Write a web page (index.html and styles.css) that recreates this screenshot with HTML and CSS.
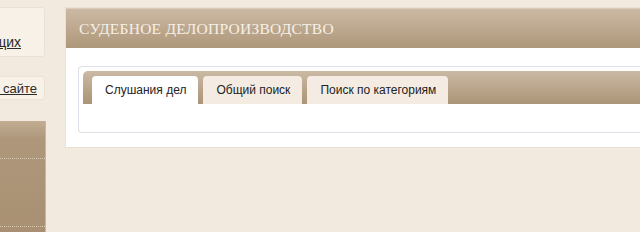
FILE: index.html
```html
<!DOCTYPE html>
<html lang="ru">
<head>
<meta charset="utf-8">
<title>Судебное делопроизводство</title>
<link rel="stylesheet" href="styles.css">
</head>
<body>
<div class="page">
  <aside class="side">
    <div class="side-box side-box--tall"><a href="#" class="side-link side-link--big">Для участвующих</a></div>
    <div class="side-box side-box--short"><a href="#" class="side-link">Информация о сайте</a></div>
    <div class="side-menu">
      <div class="side-menu-item"></div>
      <div class="side-menu-item"></div>
    </div>
  </aside>
  <main class="panel">
    <h1 class="panel-title">Судебное делопроизводство</h1>
    <div class="panel-body">
      <div class="tabs-box">
        <ul class="tabs">
          <li class="tab tab--active">Слушания дел</li>
          <li class="tab">Общий поиск</li>
          <li class="tab">Поиск по категориям</li>
        </ul>
        <div class="tab-content"></div>
      </div>
    </div>
  </main>
</div>
</body>
</html>
```

FILE: styles.css
```css
html, body {
  margin: 0;
  padding: 0;
  background: #f2e9df;
  overflow: hidden;
  height: 232px;
}
.page {
  display: flex;
  align-items: flex-start;
  gap: 20px;
  margin-left: -155px;
  padding-top: 7px;
  width: 1000px;
  font-family: "Liberation Sans", Arial, sans-serif;
}
.side {
  width: 200px;
  flex: none;
  display: flex;
  flex-direction: column;
}
.side-box {
  background: #f8f1e8;
  border: 1px solid #ebe1d5;
  border-radius: 3px;
  box-sizing: border-box;
  display: flex;
  justify-content: flex-end;
}
.side-box--tall {
  height: 50px;
  align-items: flex-end;
  padding: 0 23px 6px 0;
}
.side-box--short {
  height: 24px;
  margin-top: 19px;
  align-items: center;
  padding: 0 7px 0 0;
}
.side-link {
  color: #2b2b2b;
  text-decoration: underline;
  font-size: 13px;
  white-space: nowrap;
}
.side-link--big {
  font-size: 14px;
}
.side-menu {
  margin-top: 21px;
  height: 120px;
  width: 201px;
  background: linear-gradient(#c2ad93 0px, #ae977b 18px, #a88f72 100%);
  border-right: 1px solid #c8b79f;
  box-sizing: border-box;
  padding-top: 37px;
}
.side-menu-item {
  height: 67px;
  border-top: 1px dotted #d8c9b2;
}
.panel {
  width: 700px;
  flex: none;
  background: #fff;
  border: 1px solid #e9e1d7;
  border-right: none;
  box-sizing: border-box;
  height: 141px;
}
.panel-title {
  margin: 0;
  height: 40px;
  display: flex;
  align-items: center;
  padding-left: 13px;
  background: linear-gradient(#cbb9a3, #ae977a);
  border-top: 1px solid #d9cbb9;
  box-sizing: border-box;
  color: #f6f0e8;
  font-family: "Liberation Serif", "Times New Roman", serif;
  font-weight: normal;
  font-size: 15.5px;
  letter-spacing: 0.25px;
  text-transform: uppercase;
}
.panel-body {
  padding: 18px 0 12px 12px;
}
.tabs-box {
  border: 1px solid #dde0e6;
  border-right: none;
  border-radius: 4px 0 0 4px;
  padding: 4px 0 0 4px;
  height: 67px;
  box-sizing: border-box;
}
.tabs {
  list-style: none;
  margin: 0;
  padding: 5px 0 0 9px;
  height: 33px;
  box-sizing: border-box;
  display: flex;
  gap: 5px;
  align-items: flex-end;
  background: linear-gradient(#cab9a4, #ab9476);
  border-radius: 5px 0 0 0;
}
.tab {
  height: 28px;
  box-sizing: border-box;
  padding: 0 12px 0 13px;
  display: flex;
  align-items: center;
  background: #f4ece3;
  border-radius: 4px 4px 0 0;
  color: #222;
  font-size: 12px;
  white-space: nowrap;
}
.tab--active {
  background: #fff;
}
.tab-content {
  height: 28px;
}
```
